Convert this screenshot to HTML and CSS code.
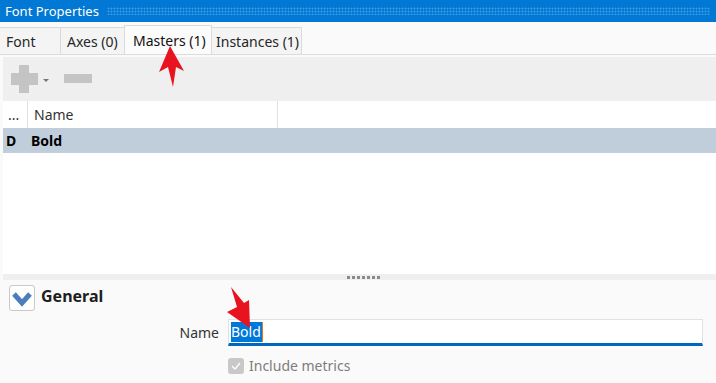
FILE: index.html
```html
<!DOCTYPE html>
<html lang="en">
<head>
  <meta charset="UTF-8">
  <title>Font Properties</title>
  <link rel="stylesheet" href="styles.css">
</head>
<body>
  <div class="titlebar">
    <span class="title">Font Properties</span>
    <span class="grip"></span>
  </div>

  <div class="tabs">
    <div class="tab tab-font">Font</div>
    <div class="tab tab-axes">Axes (0)</div>
    <div class="tab tab-masters active">Masters (1)</div>
    <div class="tab tab-instances">Instances (1)</div>
  </div>

  <div class="panel">
    <div class="toolbar">
      <svg class="tool-add" width="40" height="30" viewBox="0 0 40 30">
        <rect x="8" y="0" width="10" height="28" fill="#c4c4c4"/>
        <rect x="0" y="8" width="27" height="12" fill="#c4c4c4"/>
        <polygon points="32,14 38,14 35,17" fill="#777"/>
      </svg>
      <svg class="tool-remove" width="28" height="10" viewBox="0 0 28 10">
        <rect x="0" y="0" width="28" height="9" fill="#c4c4c4"/>
      </svg>
    </div>

    <div class="grid-head">
      <div class="col col-flag">...</div>
      <div class="col col-name">Name</div>
      <div class="col col-rest"></div>
    </div>
    <div class="grid-row selected">
      <div class="col col-flag">D</div>
      <div class="col col-name">Bold</div>
    </div>
    <div class="grid-empty"></div>

    <div class="splitter"><span class="splitter-dots"></span></div>
  </div>

  <div class="details">
    <div class="section-head">
      <span class="toggle">
        <svg width="24" height="24" viewBox="0 0 24 24">
          <polyline points="4,8 12,17 20,8" fill="none" stroke="#4a7ebf" stroke-width="5"/>
        </svg>
      </span>
      <span class="section-title">General</span>
    </div>

    <div class="form">
      <label class="form-label" for="masterName">Name</label>
      <div class="field">
        <span class="selection">Bold</span><span class="caret"></span>
      </div>
      <span></span>
      <div class="check-row">
        <span class="checkbox">
          <svg width="16" height="16" viewBox="0 0 16 16">
            <polyline points="4,8 7,11 12,5" fill="none" stroke="#fff" stroke-width="1.3"/>
          </svg>
        </span>
        <span class="check-label">Include metrics</span>
      </div>
    </div>
  </div>

  <!-- annotation arrows drawn over the screenshot -->
  <svg class="annotations" width="716" height="383" viewBox="0 0 716 383">
    <polygon points="170,46 184,71 176,67 173,87 168,67 159,72" fill="#e8131f"/>
    <polygon points="231,287 244,303 249,300 250,328 227,312 237,307" fill="#e8131f"/>
  </svg>
</body>
</html>
```

FILE: styles.css
```css
body {
  margin: 0;
  width: 716px;
  height: 383px;
  overflow: hidden;
  position: relative;
  background: #fafafa;
  font-family: "Segoe UI", "Noto Sans", "Open Sans", sans-serif;
  font-size: 14px;
  color: #1e1e1e;
}
.titlebar {
  height: 22px;
  background: #0078d4;
  display: flex;
  align-items: center;
}
.title {
  color: #fff;
  font-size: 13px;
  padding-left: 5px;
}
.grip {
  flex: 1;
  height: 8px;
  margin: 0 6px 0 8px;
  background-image: radial-gradient(circle, #3d9be3 0.9px, transparent 1.1px);
  background-size: 3px 3px;
}
.tabs {
  height: 33px;
  display: flex;
  align-items: flex-end;
  border-bottom: 1px solid #dcdcdc;
  box-sizing: border-box;
}
.tab {
  height: 27px;
  display: flex;
  align-items: center;
  box-sizing: border-box;
  background: #f4f4f4;
  border: 1px solid #dadada;
  border-bottom: none;
  border-left: none;
  color: #262626;
  white-space: nowrap;
}
.tab-font {
  width: 61px;
  padding-left: 6px;
}
.tab-axes {
  width: 64px;
  padding-left: 6px;
}
.tab-masters {
  width: 88px;
  padding-left: 8px;
}
.tab-instances {
  width: 90px;
  padding-left: 4px;
}
.tab.active {
  height: 29px;
  background: #fbfbfb;
  border-left: 1px solid #dadada;
  margin-left: -1px;
  color: #111;
}
.panel {
  margin: 2px 0 0 3px;
}
.toolbar {
  height: 44px;
  background: #efefef;
  display: flex;
  align-items: center;
  padding-left: 8px;
  gap: 13px;
}
.tool-add {
  margin-top: 2px;
}
.grid-head,
.grid-row {
  display: flex;
  background: #fff;
}
.grid-head {
  height: 27px;
  color: #333;
}
.grid-head .col {
  border-right: 1px solid #e2e2e2;
}
.col {
  display: flex;
  align-items: center;
  padding-left: 6px;
  box-sizing: border-box;
}
.col-flag {
  width: 25px;
  padding-left: 5px;
}
.col-name {
  width: 250px;
}
.grid-head .col-rest {
  flex: 1;
  border-right: none;
}
.grid-row.selected {
  height: 25px;
  background: #c0cdda;
  font-weight: bold;
  color: #000;
}
.grid-row .col-flag {
  padding-left: 3px;
}
.grid-row .col-name {
  padding-left: 3px;
}
.grid-empty {
  height: 121px;
  background: #fff;
}
.splitter {
  height: 6px;
  background: #efefef;
  display: flex;
  justify-content: center;
  align-items: center;
}
.splitter-dots {
  width: 33px;
  height: 3px;
  margin-left: 8px;
  background-image: linear-gradient(90deg, #8a8a8a 3px, transparent 3px);
  background-size: 5px 3px;
}
.details {
  padding: 5px 13px 0 9px;
}
.section-head {
  display: flex;
  align-items: center;
  gap: 6px;
}
.toggle {
  width: 26px;
  height: 26px;
  box-sizing: border-box;
  border: 1px solid #c8c8c8;
  border-radius: 3px;
  background: #fff;
  display: flex;
  align-items: center;
  justify-content: center;
}
.section-title {
  font-size: 16px;
  font-weight: bold;
  color: #1e1e1e;
  margin-top: -4px;
}
.form {
  display: grid;
  grid-template-columns: 210px 1fr;
  column-gap: 9px;
  row-gap: 10px;
  margin-top: 8px;
}
.form-label {
  text-align: right;
  align-self: center;
  color: #333;
}
.field {
  height: 27px;
  box-sizing: border-box;
  background: #fff;
  border: 1px solid #dfe3e8;
  border-bottom: 3px solid #0067c0;
  display: flex;
  align-items: center;
  padding-left: 2px;
}
.selection {
  background: #0078d7;
  color: #fff;
  line-height: 20px;
  padding-right: 1px;
}
.caret {
  width: 1px;
  height: 20px;
  background: #e07a1f;
}
.check-row {
  display: flex;
  align-items: center;
  gap: 5px;
}
.checkbox {
  width: 16px;
  height: 16px;
  border-radius: 3px;
  background: #c8c8c8;
  display: flex;
}
.check-label {
  color: #7d7d7d;
}
.annotations {
  position: absolute;
  left: 0;
  top: 0;
  pointer-events: none;
}
```
